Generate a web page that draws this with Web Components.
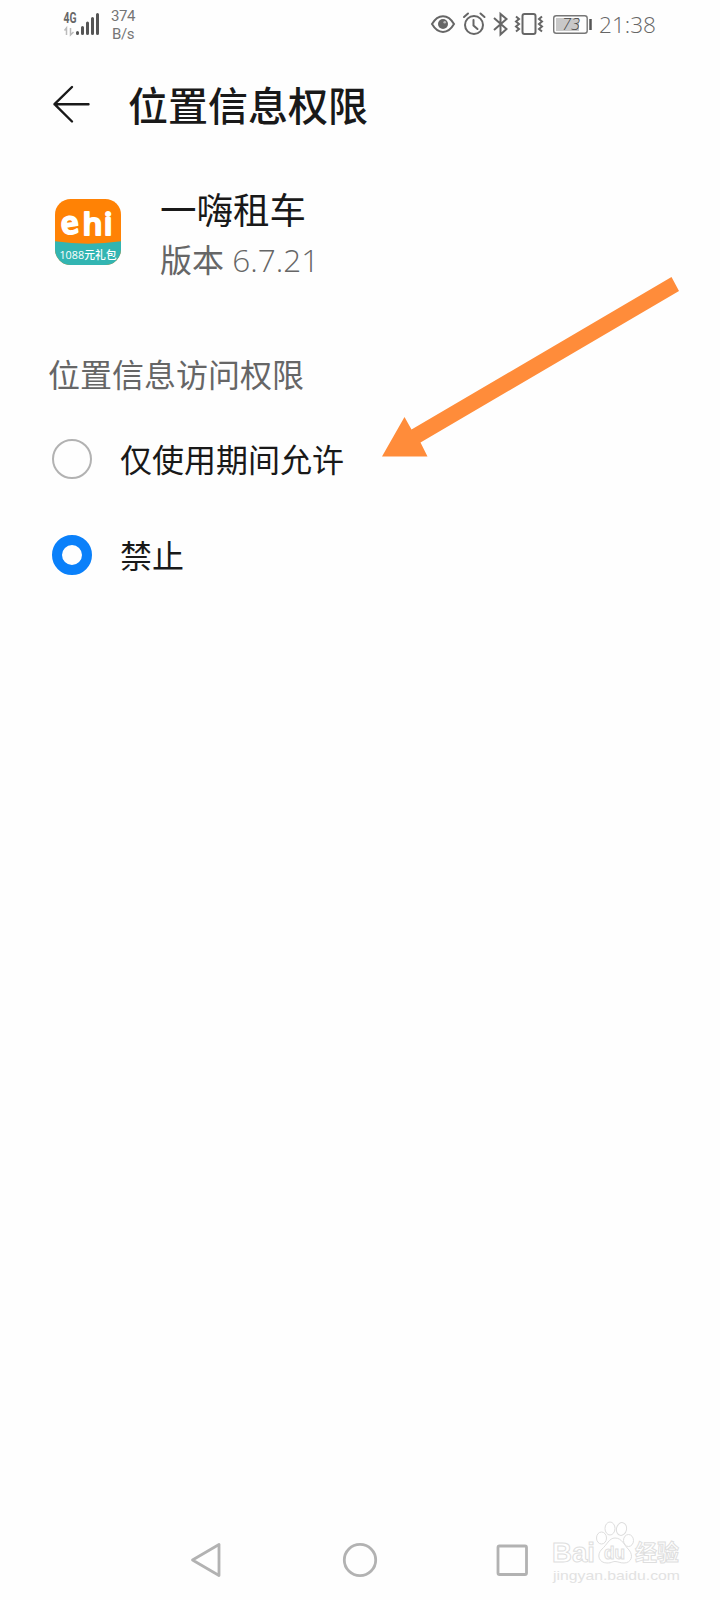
<!DOCTYPE html>
<html lang="zh-CN">
<head>
<meta charset="utf-8">
<title>位置信息权限</title>
<style>
  body {
    margin: 0;
    background: #fefefe;
    font-family: "Noto Sans", "Noto Sans CJK SC", sans-serif;
  }
</style>
</head>
<body>
<permission-screen></permission-screen>
<script>
class BaseElement extends HTMLElement {
  constructor() {
    super();
    this.attachShadow({ mode: "open" });
    this.shadowRoot.innerHTML = this.render();
  }
}

class StatusBar extends BaseElement {
  render() {
    return `
      <style>
        :host {
          display: flex;
          justify-content: space-between;
          height: 50px;
          color: #666;
        }
        svg { display: block; }
        .net, .system { display: flex; }
        .net { padding-left: 60px; }
        .speed {
          padding: 7px 0 0 11px;
          font: 15px/18px Roboto, sans-serif;
          letter-spacing: -0.4px;
          color: #757575;
        }
        .speed div:last-child { padding-left: 1px; }
        .time {
          width: 121px;
          font: 300 22.6px/49px "Open Sans", sans-serif;
        }
      </style>
      <div class="net">
        <svg width="40" height="50" viewBox="60 0 40 50">
          <text x="63.500" y="23" font-family="Roboto" font-weight="700" font-size="14" textLength="13" lengthAdjust="spacingAndGlyphs" fill="#666">4G</text>
          <path d="M66.500 35v-7l-2 2.500M70.500 28v7l3-3" fill="none" stroke="#bbb" stroke-width="1.500"/>
          <path d="M77.500 32.500v1M82.500 27.500v6M87.500 23v10.500M92.500 18.500v15M97.500 14.500v19" stroke="#555" stroke-width="3" stroke-linecap="round"/>
        </svg>
        <div class="speed"><div>374</div><div>B/s</div></div>
      </div>
      <div class="system">
        <svg width="169" height="50" viewBox="430 0 169 50" fill="none" stroke="#666" stroke-width="2">
          <path d="M432 24c6-10.500 16-10.500 22 0c-6 10.500-16 10.500-22 0z"/>
          <circle cx="443" cy="24" r="5" fill="#666" stroke="none"/>
          <circle cx="444.700" cy="22.300" r="1.300" fill="#bbb" stroke="none"/>
          <circle cx="474" cy="25" r="9"/>
          <path d="M473.500 20v5.500l4 3.500M464 17l4-3.500M480.500 13.500l4 3.500" stroke-linecap="round"/>
          <path d="M494 18l12.500 11l-6 5.500v-20.500l6 5l-12.500 11"/>
          <rect x="522.500" y="14" width="13" height="20" rx="2"/>
          <path d="M516 16.500l3 2.500l-3 2.500l3 2.500l-3 2.500l3 2.500l-3 2.500M542 16.500l-3 2.500l3 2.500l-3 2.500l3 2.500l-3 2.500l3 2.500"/>
          <rect x="556" y="18" width="23" height="13" fill="#c8c8c8" stroke="none"/>
          <rect x="553.700" y="15.700" width="33.500" height="17.500" rx="2.500" stroke="#777" stroke-width="1.400"/>
          <path d="M590.500 19v11" stroke="#555" stroke-width="2.500"/>
          <text x="562" y="30" font-family="Open Sans" font-size="15.500" font-style="italic" font-weight="300" textLength="18" lengthAdjust="spacingAndGlyphs" fill="#444" stroke="none">73</text>
        </svg>
        <div class="time">21:38</div>
      </div>
    `;
  }
}

class ScreenHeader extends BaseElement {
  render() {
    return `
      <style>
        :host {
          display: flex;
          align-items: center;
          gap: 37px;
          height: 110px;
          padding-left: 51px;
          color: #191919;
        }
        .title { padding-top: 2px; font-size: 40px; line-height: 60px; font-weight: 500; }
        svg { display: block; margin-top: -3px; }
      </style>
      <svg width="40" height="40" viewBox="0 0 40 40" fill="none" stroke="#191919" stroke-width="2.400" stroke-linecap="round" stroke-linejoin="round">
        <path d="M21 3L3.500 20.200L21 37.500M3.500 20.200H37.500"/>
      </svg>
      <div class="title"><slot></slot></div>
    `;
  }
}

class AppSummary extends BaseElement {
  render() {
    return `
      <style>
        :host {
          display: flex;
          gap: 39px;
          height: 180px;
          padding-left: 55px;
        }
        svg { display: block; margin-top: 39px; }
        .info { padding-top: 24px; }
        .name { font-size: 36.500px; line-height: 52px; color: #191919; }
        .version { font-size: 32px; line-height: 48px; color: #666; }
        .number { font-family: "Open Sans", sans-serif; font-weight: 300; font-size: 31.500px; }
      </style>
      <svg width="66" height="66" viewBox="0 0 67 67">
        <defs><clipPath id="tile"><rect width="67" height="67" rx="16"/></clipPath></defs>
        <g clip-path="url(#tile)">
          <rect width="67" height="67" fill="#ff8205"/>
          <path d="M0 43Q33.500 48 67 43V67H0z" fill="#32b5b2"/>
        </g>
        <text y="36.500" font-family="Open Sans" font-size="32" font-weight="600" fill="#fff" stroke="#fff" stroke-width="2" stroke-linejoin="round"><tspan x="7" rotate="-8">e</tspan><tspan x="28">h</tspan><tspan x="49.500">i</tspan></text>
        <text x="4.500" y="61" font-family="Open Sans, Noto Sans CJK SC" font-size="11" font-weight="500" textLength="58" lengthAdjust="spacingAndGlyphs" fill="#fff">1088元礼包</text>
      </svg>
      <div class="info">
        <div class="name"><slot name="name"></slot></div>
        <div class="version">版本 <span class="number"><slot name="version"></slot></span></div>
      </div>
    `;
  }
}

class RadioOption extends BaseElement {
  render() {
    return `
      <style>
        :host {
          display: flex;
          align-items: center;
          gap: 28px;
          height: 96px;
          padding-left: 52px;
          font-size: 32px;
          line-height: 48px;
          color: #191919;
        }
        .dot {
          box-sizing: border-box;
          width: 40px;
          height: 40px;
          border: 2px solid #b2b2b2;
          border-radius: 50%;
        }
        .label { padding-top: 2px; }
        :host([checked]) .dot { border: 10px solid #0a80fa; }
      </style>
      <div class="dot"></div>
      <div class="label"><slot></slot></div>
    `;
  }
}

class PointerArrow extends BaseElement {
  render() {
    return `
      <style>
        :host { position: absolute; left: 370px; top: 260px; }
        svg { display: block; }
      </style>
      <svg width="320" height="210" viewBox="0 0 320 210">
        <path d="M301.500 17L309 31L50.500 182.500L57.500 196.500H12L34.500 157L41.500 169.500z" fill="#ff8c3a"/>
      </svg>
    `;
  }
}

class NavBar extends BaseElement {
  render() {
    return `
      <style>
        :host {
          display: flex;
          justify-content: center;
          align-items: center;
          gap: 112px;
          height: 80px;
        }
        svg { display: block; }
      </style>
      <svg width="40" height="40" viewBox="0 0 40 40" fill="none" stroke="#b2b2b2" stroke-width="2.800" stroke-linejoin="round"><path d="M4.500 20L31 4.500V35.500z"/></svg>
      <svg width="40" height="40" viewBox="0 0 40 40" fill="none" stroke="#b2b2b2" stroke-width="2.800"><circle cx="20" cy="20" r="15.700"/></svg>
      <svg width="40" height="40" viewBox="0 0 40 40" fill="none" stroke="#b2b2b2" stroke-width="2.800"><rect x="6" y="6" width="28.500" height="28.500" rx="1.500"/></svg>
    `;
  }
}

class SiteWatermark extends BaseElement {
  render() {
    return `
      <style>
        :host { position: absolute; left: 540px; top: 1510px; }
        svg { display: block; }
      </style>
      <svg width="160" height="80" viewBox="0 0 160 80" fill="#fff" stroke="#dedede" stroke-width="1">
        <text x="12" y="51.500" font-family="Liberation Sans" font-weight="700" font-size="27" textLength="43" lengthAdjust="spacingAndGlyphs">Bai</text>
        <ellipse cx="61.500" cy="28" rx="5" ry="6"/>
        <ellipse cx="70" cy="18.500" rx="5" ry="6.500"/>
        <ellipse cx="81.500" cy="19" rx="5" ry="6.500" transform="rotate(12 81.500 19)"/>
        <ellipse cx="88.500" cy="30.500" rx="5" ry="6"/>
        <path d="M75 28C69 28 67 35 62 39C56 45 59 53 67 53C72 53 72 51.500 75 51.500S80 53 84 53C91 53 94 46 89 40C84 35 82 28 75 28z"/>
        <text x="64" y="49" font-family="Liberation Sans" font-weight="700" font-size="18" textLength="21" lengthAdjust="spacingAndGlyphs">du</text>
        <text x="95" y="50" font-family="Noto Sans CJK SC" font-weight="700" font-size="22" textLength="44" lengthAdjust="spacingAndGlyphs">经验</text>
        <text x="13" y="70" font-family="Liberation Sans" font-size="13.500" textLength="127" lengthAdjust="spacingAndGlyphs" fill="#e2e2e2" stroke="none">jingyan.baidu.com</text>
      </svg>
    `;
  }
}

class PermissionScreen extends BaseElement {
  render() {
    return `
      <style>
        :host {
          display: flex;
          flex-direction: column;
          position: relative;
          width: 720px;
          height: 1600px;
          overflow: hidden;
        }
        .section { padding: 11px 0 12px 48px; font-size: 32px; line-height: 48px; color: #666; }
        .options { flex: 1; }
      </style>
      <status-bar></status-bar>
      <screen-header>位置信息权限</screen-header>
      <app-summary>
        <span slot="name">一嗨租车</span>
        <span slot="version">6.7.21</span>
      </app-summary>
      <div class="section">位置信息访问权限</div>
      <div class="options">
        <radio-option>仅使用期间允许</radio-option>
        <radio-option checked>禁止</radio-option>
      </div>
      <nav-bar></nav-bar>
      <pointer-arrow></pointer-arrow>
      <site-watermark></site-watermark>
    `;
  }
}

customElements.define("status-bar", StatusBar);
customElements.define("screen-header", ScreenHeader);
customElements.define("app-summary", AppSummary);
customElements.define("radio-option", RadioOption);
customElements.define("pointer-arrow", PointerArrow);
customElements.define("nav-bar", NavBar);
customElements.define("site-watermark", SiteWatermark);
customElements.define("permission-screen", PermissionScreen);
</script>
</body>
</html>
